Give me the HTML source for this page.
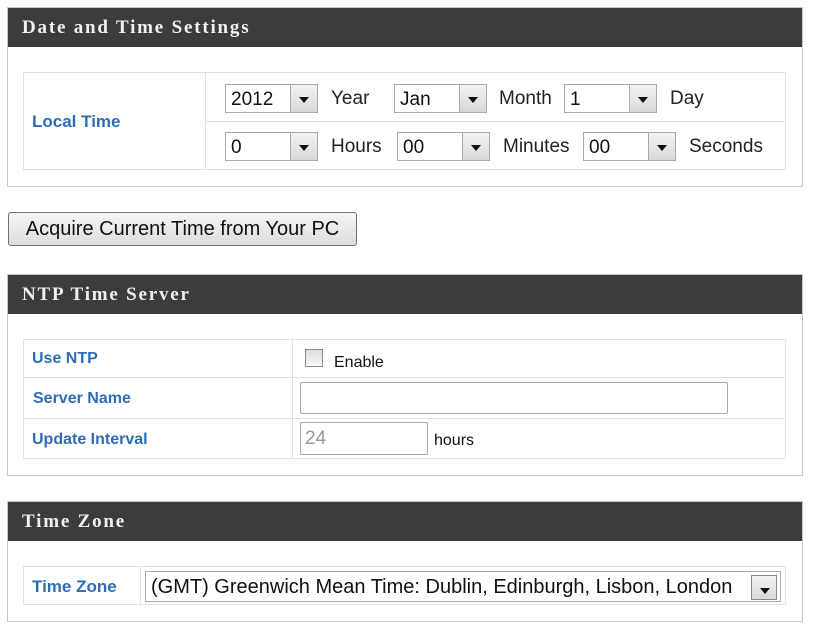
<!DOCTYPE html><html><head><style>
body{margin:0;width:815px;height:633px;background:#fff;font-family:"Liberation Sans",Arial,sans-serif;position:relative;overflow:hidden}
.a{position:absolute}
.box{position:absolute;left:7px;width:794px;border:1px solid #c8c8c8;background:#fff}
.hd{position:absolute;left:0;top:0;right:0;height:39px;background:#3b3c3b;color:#f0f0f0;font-family:"Liberation Serif",serif;font-weight:bold;font-size:19px;letter-spacing:1.8px;line-height:40px;padding-left:14px}
.tb{position:absolute;border:1px solid #e2e2e2}
.ln{position:absolute;background:#e2e2e2}
.lb{position:absolute;color:#2e6db4;font-weight:bold;font-size:16px}
.sel{position:absolute;height:29px;border:1px solid #a9a9a9;background:#fff;font-size:19px;line-height:29px;padding-left:5px;box-sizing:border-box;color:#111}
.sel b{position:absolute;right:0;top:0;width:26px;height:27px;background:linear-gradient(#f4f4f4,#d8d8d8);border-left:1px solid #a9a9a9}
.sel b:after{content:"";position:absolute;left:8px;top:12px;border:5px solid transparent;border-top:6px solid #111;border-bottom:0}
.t{position:absolute;font-size:19px;color:#222}
</style></head><body>
<div class="box" style="top:7px;height:178px">
<div class="hd">Date and Time Settings</div></div>
<div class="tb" style="left:23px;top:72px;width:761px;height:96px"></div>
<div class="ln" style="left:205px;top:72px;width:1px;height:98px"></div>
<div class="ln" style="left:205px;top:121px;width:580px;height:1px"></div>
<div class="lb" style="left:32px;top:112px;font-size:17px">Local Time</div>
<div class="sel" style="left:225px;top:84px;width:93px">2012<b></b></div><div class="t" style="left:331px;top:88px">Year</div>
<div class="sel" style="left:394px;top:84px;width:93px">Jan<b></b></div><div class="t" style="left:499px;top:88px">Month</div>
<div class="sel" style="left:564px;top:84px;width:93px">1<b></b></div><div class="t" style="left:670px;top:88px">Day</div>
<div class="sel" style="left:225px;top:132px;width:93px">0<b></b></div><div class="t" style="left:331px;top:136px">Hours</div>
<div class="sel" style="left:397px;top:132px;width:93px">00<b></b></div><div class="t" style="left:503px;top:136px">Minutes</div>
<div class="sel" style="left:583px;top:132px;width:93px">00<b></b></div><div class="t" style="left:689px;top:136px">Seconds</div>
<div class="a" style="left:8px;top:212px;width:349px;height:34px;border:1px solid #707070;border-radius:3px;background:linear-gradient(#f6f6f6,#dcdcdc);box-sizing:border-box;font-size:20px;line-height:33px;text-align:center;color:#111">Acquire Current Time from Your PC</div>
<div class="box" style="top:274px;height:200px"><div class="hd">NTP Time Server</div></div>
<div class="tb" style="left:23px;top:339px;width:761px;height:118px"></div>
<div class="ln" style="left:292px;top:339px;width:1px;height:120px"></div>
<div class="ln" style="left:23px;top:377px;width:762px;height:1px"></div>
<div class="ln" style="left:23px;top:418px;width:762px;height:1px"></div>
<div class="lb" style="left:32px;top:350px">Use NTP</div>
<div class="lb" style="left:33px;top:390px">Server Name</div>
<div class="lb" style="left:32px;top:431px">Update Interval</div>
<div class="a" style="left:305px;top:349px;width:18px;height:18px;border:1px solid #8a8a8a;background:linear-gradient(#ddd,#f8f8f8);box-sizing:border-box"></div>
<div class="a" style="left:334px;top:354px;font-size:16px;color:#111">Enable</div>
<div class="a" style="left:300px;top:382px;width:428px;height:32px;border:1px solid #a9a9a9;border-radius:2px;box-sizing:border-box"></div>
<div class="a" style="left:300px;top:422px;width:128px;height:33px;border:1px solid #a9a9a9;border-radius:2px;box-sizing:border-box;font-size:19px;color:#999;line-height:31px;padding-left:4px">24</div>
<div class="a" style="left:434px;top:432px;font-size:16px;color:#111">hours</div>
<div class="box" style="top:501px;height:119px"><div class="hd">Time Zone</div></div>
<div class="tb" style="left:23px;top:566px;width:761px;height:37px"></div>
<div class="ln" style="left:140px;top:566px;width:1px;height:38px"></div>
<div class="lb" style="left:32px;top:577px;font-size:17px">Time Zone</div>
<div class="sel" style="left:145px;top:571px;width:636px;height:31px;line-height:30px;font-size:20px">(GMT) Greenwich Mean Time: Dublin, Edinburgh, Lisbon, London<b style="width:24px;height:23px;top:3px;right:3px;border:1px solid #888"></b></div>
</body></html>
